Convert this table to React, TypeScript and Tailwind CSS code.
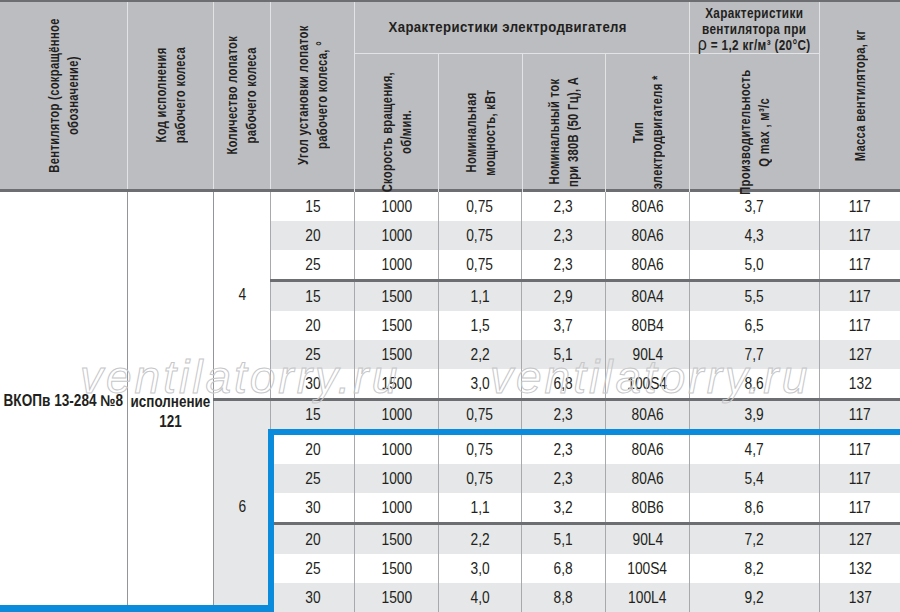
import React from "react";

type R = [string, string, string, string, string, string, string];

const g4a: R[] = [
  ["15", "1000", "0,75", "2,3", "80A6", "3,7", "117"],
  ["20", "1000", "0,75", "2,3", "80A6", "4,3", "117"],
  ["25", "1000", "0,75", "2,3", "80A6", "5,0", "117"],
];
const g4b: R[] = [
  ["15", "1500", "1,1", "2,9", "80A4", "5,5", "117"],
  ["20", "1500", "1,5", "3,7", "80B4", "6,5", "117"],
  ["25", "1500", "2,2", "5,1", "90L4", "7,7", "127"],
  ["30", "1500", "3,0", "6,8", "100S4", "8,6", "132"],
];
const g6first: R = ["15", "1000", "0,75", "2,3", "80A6", "3,9", "117"];
const g6a: R[] = [
  ["20", "1000", "0,75", "2,3", "80A6", "4,7", "117"],
  ["25", "1000", "0,75", "2,3", "80A6", "5,4", "117"],
  ["30", "1000", "1,1", "3,2", "80B6", "8,6", "117"],
];
const g6b: R[] = [
  ["20", "1500", "2,2", "5,1", "90L4", "7,2", "127"],
  ["25", "1500", "3,0", "6,8", "100S4", "8,2", "132"],
  ["30", "1500", "4,0", "8,8", "100L4", "9,2", "137"],
];

const W = ["w-[84px]", "w-[84px]", "w-[83px]", "w-[84px]", "w-[84px]", "w-[130px]", "w-[81px]"];

function Row({ d, grey, h = "h-[29px]" }: { d: R; grey: boolean; h?: string }) {
  return (
    <div className={`flex ${h} ${grey ? "bg-[#e6e7e8]" : "bg-white"}`}>
      {d.map((v, k) => (
        <div
          key={k}
          className={`${W[k]} shrink-0 border-l border-[#a7a9ac] flex items-center justify-center`}
        >
          <span className="inline-block scale-x-[0.86] whitespace-nowrap">{v}</span>
        </div>
      ))}
    </div>
  );
}

function Sep() {
  return <div className="h-[3px] bg-[#6d6e71]" />;
}

function V({ children }: { children: React.ReactNode }) {
  return (
    <div className="[writing-mode:vertical-rl] rotate-180 scale-y-[0.8] text-center leading-[19px] whitespace-nowrap">
      {children}
    </div>
  );
}

const HC = "shrink-0 border-l border-[#e2e3e4] flex items-center justify-center";

export default function App() {
  return (
    <div className="relative w-[900px] h-[612px] overflow-hidden bg-white text-[#231f20] font-['Liberation_Sans',Arial,sans-serif]">
      {/* header */}
      <div className="flex h-[192px] border-t-2 border-b-[3px] border-[#6d6e71] bg-[#bcbdc0] font-bold text-[14px] tracking-[0.4px]">
        <div className="w-[127px] shrink-0 flex items-center justify-center">
          <V>
            Вентилятор (сокращённое
            <br />
            обозначение)
          </V>
        </div>
        <div className={`w-[86px] ${HC}`}>
          <V>
            Код исполнения
            <br />
            рабочего колеса
          </V>
        </div>
        <div className={`w-[57px] ${HC}`}>
          <V>
            Количество лопаток
            <br />
            рабочего колеса
          </V>
        </div>
        <div className={`w-[84px] ${HC}`}>
          <V>
            Угол установки лопаток
            <br />
            рабочего колеса, °
          </V>
        </div>
        <div className="w-[465px] shrink-0 flex flex-col">
          <div className="flex h-[53px] border-b border-[#e2e3e4]">
            <div className={`w-[335px] ${HC} pr-[28px]`}>
              <span className="inline-block scale-x-[0.94] whitespace-nowrap">Характеристики электродвигателя</span>
            </div>
            <div className={`w-[130px] ${HC} text-center leading-[16px]`}>
              <div className="scale-x-[0.84] whitespace-nowrap pt-[3px]">
                Характеристики
                <br />
                вентилятора при
                <br />
                <span className="text-[19px] font-normal leading-[14px]">ρ</span> = 1,2 кг/м³ (20°C)
              </div>
            </div>
          </div>
          <div className="flex flex-1">
            <div className={`w-[84px] ${HC}`}>
              <V>
                Скорость вращения,
                <br />
                об/мин.
              </V>
            </div>
            <div className={`w-[84px] ${HC}`}>
              <V>
                Номинальная
                <br />
                мощность, кВт
              </V>
            </div>
            <div className={`w-[83px] ${HC}`}>
              <V>
                Номинальный ток
                <br />
                при 380В (50 Гц), А
              </V>
            </div>
            <div className={`w-[84px] ${HC}`}>
              <V>
                Тип
                <br />
                электродвигателя *
              </V>
            </div>
            <div className={`w-[130px] ${HC}`}>
              <V>
                Производительность
                <br />Q max , м³/с
              </V>
            </div>
          </div>
        </div>
        <div className={`w-[81px] ${HC}`}>
          <V>Масса вентилятора, кг</V>
        </div>
      </div>

      {/* body */}
      <div className="flex h-[420px] text-[16px]">
        <div className="w-[127px] shrink-0 flex items-center justify-center font-bold text-[16px]">
          <span className="inline-block scale-x-[0.85] whitespace-nowrap pb-[2px]">ВКОПв 13-284 №8</span>
        </div>
        <div className="w-[86px] shrink-0 border-l border-[#939598] flex items-center justify-center text-center font-bold text-[16px] leading-[20px] pt-[20px]">
          <div className="scale-x-[0.84] whitespace-nowrap">
            исполнение
            <br />
            121
          </div>
        </div>
        <div className="flex-1 flex flex-col">
          <div className="flex">
            <div className="w-[57px] shrink-0 border-l border-[#939598] bg-white flex items-center justify-center">
              <span className="inline-block scale-x-[0.86]">4</span>
            </div>
            <div className="flex flex-col">
              {g4a.map((d, i) => (
                <Row key={i} d={d} grey={i % 2 === 1} />
              ))}
              <Sep />
              {g4b.map((d, i) => (
                <Row key={i} d={d} grey={i % 2 === 0} />
              ))}
            </div>
          </div>
          <Sep />
          <div className="flex flex-1">
            <div className="w-[57px] shrink-0 border-l border-[#939598] bg-[#e6e7e8] flex items-center justify-center">
              <span className="inline-block scale-x-[0.86]">6</span>
            </div>
            <div className="flex flex-col">
              <Row d={g6first} grey h="h-[28px]" />
              <div className="h-[6px]" />
              {g6a.map((d, i) => (
                <Row key={i} d={d} grey={i % 2 === 1} />
              ))}
              <Sep />
              {g6b.map((d, i) => (
                <Row key={i} d={d} grey={i % 2 === 0} />
              ))}
            </div>
          </div>
        </div>
      </div>

      {/* watermark */}
      <div className="pointer-events-none absolute left-[80px] top-[354px] text-[46px] leading-none italic tracking-[3px] text-transparent [-webkit-text-stroke:1px_#c6c7c9] whitespace-nowrap">
        ventilatorry.ru
      </div>
      <div className="pointer-events-none absolute left-[490px] top-[354px] text-[46px] leading-none italic tracking-[3px] text-transparent [-webkit-text-stroke:1px_#c6c7c9] whitespace-nowrap">
        ventilatorry.ru
      </div>

      {/* blue highlight outline */}
      <div className="absolute left-[268px] top-[429px] w-[632px] h-[6px] bg-[#0a8bdc]" />
      <div className="absolute left-[268px] top-[429px] w-[6px] h-[183px] bg-[#0a8bdc]" />
      <div className="absolute left-0 top-[605px] w-[274px] h-[7px] bg-[#0a8bdc]" />
    </div>
  );
}
